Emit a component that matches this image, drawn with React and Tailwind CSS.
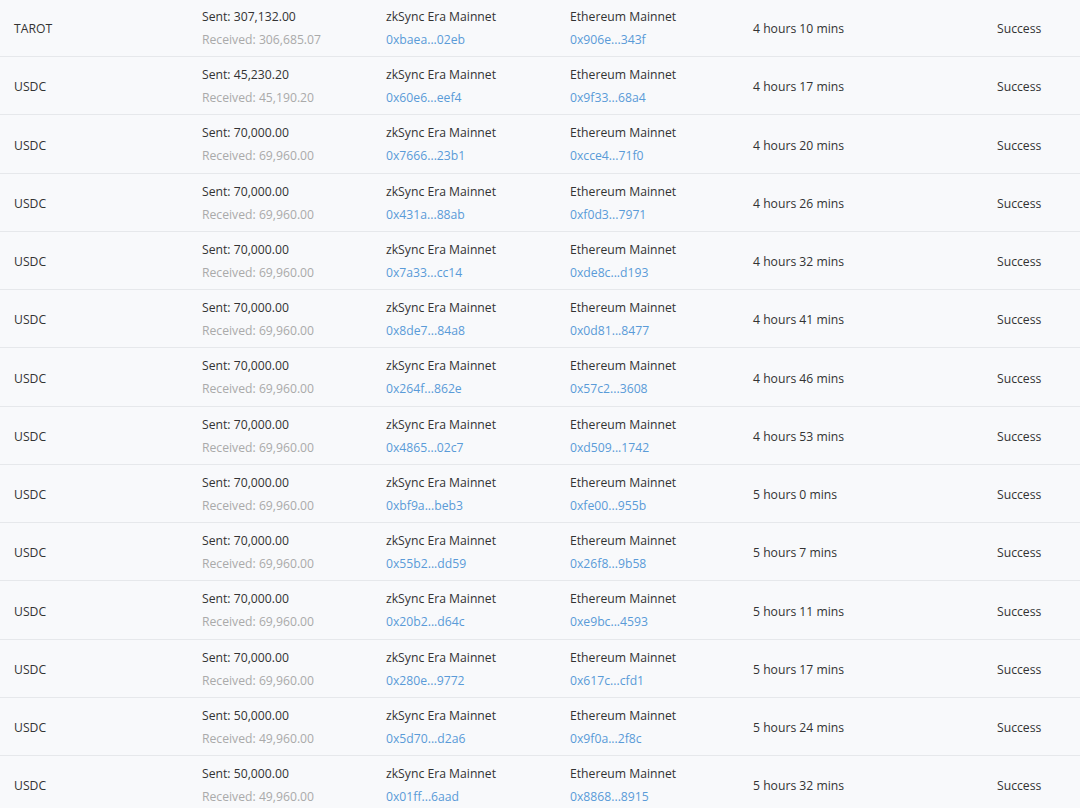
import React from "react";

const rows = [
  ["TAROT", "307,132.00", "306,685.07", "0xbaea...02eb", "0x906e...343f", "4 hours 10 mins"],
  ["USDC", "45,230.20", "45,190.20", "0x60e6...eef4", "0x9f33...68a4", "4 hours 17 mins"],
  ["USDC", "70,000.00", "69,960.00", "0x7666...23b1", "0xcce4...71f0", "4 hours 20 mins"],
  ["USDC", "70,000.00", "69,960.00", "0x431a...88ab", "0xf0d3...7971", "4 hours 26 mins"],
  ["USDC", "70,000.00", "69,960.00", "0x7a33...cc14", "0xde8c...d193", "4 hours 32 mins"],
  ["USDC", "70,000.00", "69,960.00", "0x8de7...84a8", "0x0d81...8477", "4 hours 41 mins"],
  ["USDC", "70,000.00", "69,960.00", "0x264f...862e", "0x57c2...3608", "4 hours 46 mins"],
  ["USDC", "70,000.00", "69,960.00", "0x4865...02c7", "0xd509...1742", "4 hours 53 mins"],
  ["USDC", "70,000.00", "69,960.00", "0xbf9a...beb3", "0xfe00...955b", "5 hours 0 mins"],
  ["USDC", "70,000.00", "69,960.00", "0x55b2...dd59", "0x26f8...9b58", "5 hours 7 mins"],
  ["USDC", "70,000.00", "69,960.00", "0x20b2...d64c", "0xe9bc...4593", "5 hours 11 mins"],
  ["USDC", "70,000.00", "69,960.00", "0x280e...9772", "0x617c...cfd1", "5 hours 17 mins"],
  ["USDC", "50,000.00", "49,960.00", "0x5d70...d2a6", "0x9f0a...2f8c", "5 hours 24 mins"],
  ["USDC", "50,000.00", "49,960.00", "0x01ff...6aad", "0x8868...8915", "5 hours 32 mins"],
];

const App = () => {
  return (
    <div
      className="w-[1080px] h-[808px] overflow-hidden bg-[#f8f9fb] text-[12.2px] text-[#333]"
      style={{ fontFamily: '"Open Sans", "Noto Sans", sans-serif' }}
    >
      <div className="-mt-[1.25px]">
        {rows.map((r, i) => (
          <div
            key={i}
            className="h-[58.25px] border-b border-[#e6e8eb] px-[14px] grid grid-cols-[188px_184px_184px_183px_244px_1fr] items-center"
          >
            <div className="pt-[4px]">{r[0]}</div>
            <div className="pt-[2px] flex flex-col gap-[5px] leading-[18px]">
              <span>Sent: {r[1]}</span>
              <span className="text-[#aaa]">Received: {r[2]}</span>
            </div>
            <div className="pt-[2px] flex flex-col gap-[5px] leading-[18px]">
              <span>zkSync Era Mainnet</span>
              <span className="text-[#5a9bd8]">{r[3]}</span>
            </div>
            <div className="pt-[2px] flex flex-col gap-[5px] leading-[18px]">
              <span>Ethereum Mainnet</span>
              <span className="text-[#5a9bd8]">{r[4]}</span>
            </div>
            <div className="pt-[4px]">{r[5]}</div>
            <div className="pt-[4px]">Success</div>
          </div>
        ))}
      </div>
    </div>
  );
};

export default App;
